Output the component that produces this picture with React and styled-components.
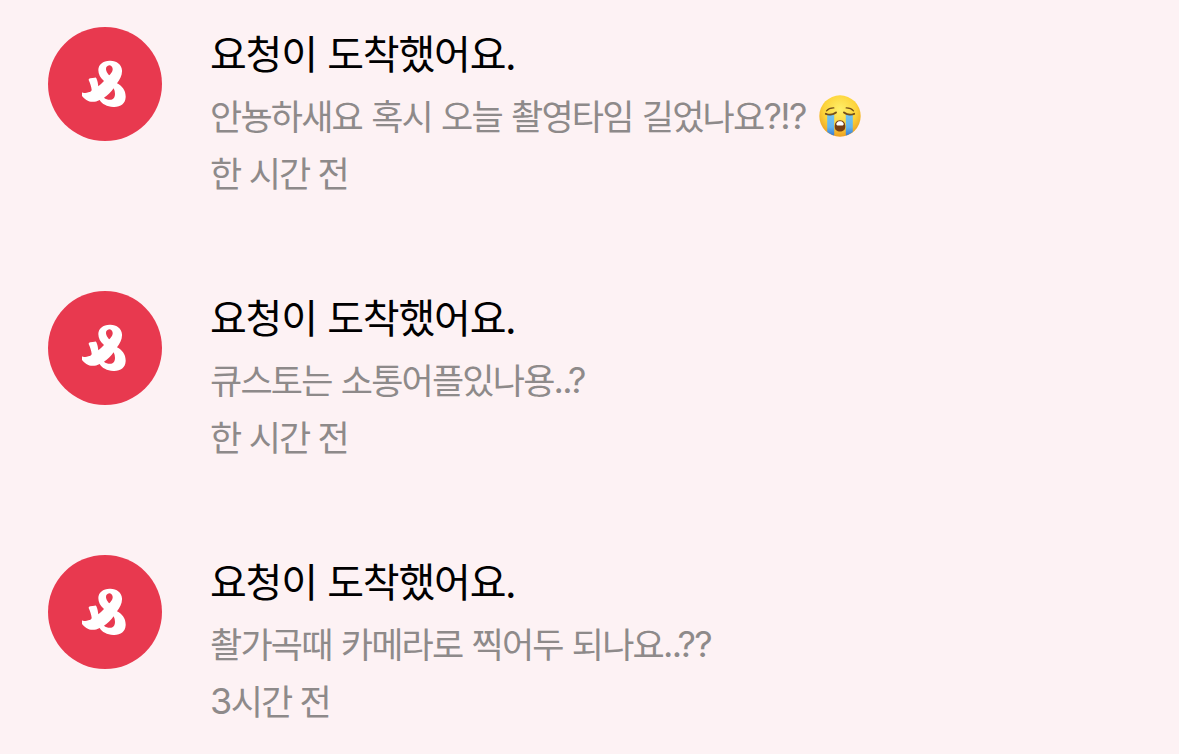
import React from "react";
import styled, { createGlobalStyle } from "styled-components";

const notifications = [
  {
    id: 1,
    title: "요청이 도착했어요.",
    message: "안뇽하새요 혹시 오늘 촬영타임 길었나요",
    marks: "?!?",
    crying: true,
    time: "한 시간 전",
  },
  {
    id: 2,
    title: "요청이 도착했어요.",
    message: "큐스토는 소통어플있나용",
    marks: "..?",
    time: "한 시간 전",
  },
  {
    id: 3,
    title: "요청이 도착했어요.",
    message: "촬가곡때 카메라로 찍어두 되나요",
    marks: "..??",
    hours: "3",
    time: "시간 전",
  },
];

function Logo() {
  return (
    <LogoMark viewBox="125 120 140 145" aria-hidden="true">
      <path
        fillRule="evenodd"
        d="M208 122C228 121 244 133 245 151C246 165 239 178 230 190C246 198 257 212 256 232C255 252 240 262 219 261C200 260 185 252 178 240C165 247 150 248 138 240C129 234 124 228 121 222C120 218 123 217 128 218C134 220 139 219 144 217C150 216 154 213 154 209C153 200 149 189 145 180C145 177 147 176 150 175L163 173C166 172 168 174 169 177C172 184 173 191 174 199C180 194 186 189 191 183C180 174 174 163 174 150C174 134 188 122 208 122ZM207 136C199 137 195 144 198 152C200 158 203 162 207 166C212 161 218 154 217 146C216 140 212 136 207 136ZM220 205C212 216 202 226 191 233C197 238 206 241 213 239C225 236 227 220 220 205Z"
      />
    </LogoMark>
  );
}

function CryingFace() {
  return (
    <Emoji viewBox="0 0 42 42" role="img" aria-label="😭">
      <defs>
        <radialGradient id="face" cx="50%" cy="35%" r="65%">
          <stop offset="0" stopColor="#fff06a" />
          <stop offset="0.6" stopColor="#fdd43b" />
          <stop offset="1" stopColor="#eda022" />
        </radialGradient>
        <linearGradient id="tear" x1="0" y1="0" x2="0" y2="1">
          <stop offset="0" stopColor="#72c3f0" />
          <stop offset="0.6" stopColor="#63b5ee" />
          <stop offset="1" stopColor="#3579d2" />
        </linearGradient>
      </defs>
      <circle cx="21" cy="21" r="20.7" fill="url(#face)" />
      <path
        d="M8.2 19.5H15.2V40.6C12.5 39.8 10.2 38.5 8.2 37ZM26.8 19.5H33.8V37C31.8 38.6 29.5 39.8 26.8 40.6Z"
        fill="url(#tear)"
      />
      <g fill="none" stroke="#76501b" strokeLinecap="round">
        <path d="M7.5 15.8C9.2 13.8 11.6 12.8 14.8 12.9M27.2 12.9C30.4 12.8 32.8 13.8 34.5 15.8" strokeWidth="1.3" />
        <path d="M6.8 18.8C9.5 20 14 19.8 17 17.4M25 17.4C28 19.8 32.5 20 35.2 18.8" strokeWidth="1.9" />
      </g>
      <path d="M21 25.2C25 25.2 26.3 28.5 26.3 31.8C26.3 35 24 36.5 21 36.5C18 36.5 15.7 35 15.7 31.8C15.7 28.5 17 25.2 21 25.2Z" fill="#773e14" />
      <path d="M17.4 28.6C18.2 26.8 19.4 26.2 21 26.2C22.6 26.2 23.8 26.8 24.6 28.6C24.9 29.8 24.4 30.4 23.6 30.4H18.4C17.6 30.4 17.1 29.8 17.4 28.6Z" fill="#fff" />
    </Emoji>
  );
}

export default function App() {
  return (
    <>
      <GlobalStyle />
      <List>
        {notifications.map(({ id, title, message, marks, crying, hours, time }) => (
          <Item key={id}>
            <Avatar>
              <Logo />
            </Avatar>
            <Content>
              <Title>{title}</Title>
              <Message>
                {message}
                <Latin>{marks}</Latin>
                {crying && <CryingFace />}
              </Message>
              <Time>
                {hours && <Latin>{hours}</Latin>}
                {time}
              </Time>
            </Content>
          </Item>
        ))}
      </List>
    </>
  );
}

const GlobalStyle = createGlobalStyle`
  * {
    box-sizing: border-box;
  }

  body {
    margin: 0;
    background: #fdf2f4;
    font-family: "Noto Sans CJK KR", sans-serif;
    overflow: hidden;
  }
`;

const List = styled.ul`
  display: flex;
  flex-direction: column;
  height: 754px;
  margin: 0;
  padding: 27px 48px 0;
  overflow: hidden;
  list-style: none;
`;

const Item = styled.li`
  display: flex;
  flex: none;
  align-items: flex-start;
  gap: 48px;
  height: 264px;
`;

const Avatar = styled.div`
  display: flex;
  flex: none;
  align-items: center;
  justify-content: center;
  width: 114px;
  height: 114px;
  border-radius: 50%;
  background: #e8394f;
`;

const LogoMark = styled.svg`
  width: 46.67px;
  height: 48.33px;
  fill: #fff;
`;

const Content = styled.div`
  display: flex;
  flex-direction: column;
  white-space: nowrap;
`;

const Title = styled.p`
  margin: 0;
  height: 59px;
  color: #000;
  font-size: 40px;
  line-height: 50px;
  letter-spacing: -1.2px;
  word-spacing: 2.7px;
`;

const Message = styled.p`
  display: flex;
  align-items: center;
  margin: 0;
  height: 57px;
  color: #8e8a8a;
  font-size: 35px;
  line-height: 57px;
  letter-spacing: -1.8px;
  word-spacing: 3.1px;
`;

const Latin = styled.span`
  padding-top: 4px;
  font-family: Inter, sans-serif;
  font-size: 36px;
  font-weight: 400;
  letter-spacing: -1.6px;
`;

const Emoji = styled.svg`
  width: 42px;
  height: 42px;
  margin: 2px 0 0 13px;
`;

const Time = styled(Message).attrs({ as: "time" })`
  letter-spacing: -1.9px;
  word-spacing: 2.4px;
`;
